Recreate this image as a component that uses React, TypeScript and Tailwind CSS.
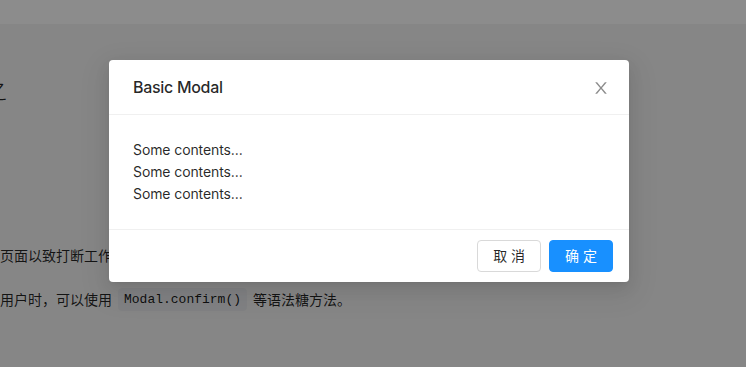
export default function App() {
  return (
    <div className="relative h-screen w-full overflow-hidden bg-[#f5f5f5] font-['Liberation_Sans','Noto_Sans_CJK_SC',sans-serif] text-black/85">
      <div className="h-6 bg-white" />
      <div className="flex flex-col">
        <h2 className="mt-[51px] -ml-[17px] text-2xl leading-8 font-light text-black/85">之</h2>
        <p className="mt-[138px] whitespace-nowrap text-sm leading-[22px]">
          页面以致打断工作流程，若需要进行复杂的交互，可以使用对话框。
        </p>
        <p className="mt-[21px] flex items-center whitespace-nowrap text-sm leading-[22px]">
          <span>用户时，可以使用</span>
          <code className="mx-[6px] rounded-sm bg-[#eaecee] px-[6px] py-[1px] font-['Liberation_Mono',monospace] text-[13px] leading-[21px] text-black/90">
            Modal.confirm()
          </code>
          <span>等语法糖方法。</span>
        </p>
      </div>

      <div className="absolute inset-0 bg-black/45 pt-[60px] pl-[109px]">
        <div className="relative w-[520px] rounded-sm bg-white font-['Inter','Noto_Sans_CJK_SC',sans-serif] shadow-[0_3px_6px_-4px_rgba(0,0,0,0.12),0_6px_16px_0_rgba(0,0,0,0.08),0_9px_28px_8px_rgba(0,0,0,0.05)]">
          <div className="border-b border-[#f0f0f0] px-6 py-4">
            <div className="text-base leading-[22px] font-medium tracking-[-0.3px] text-black/85">Basic Modal</div>
          </div>
          <button className="absolute top-0 right-0 flex h-14 w-14 items-center justify-center text-black/45">
            <svg viewBox="64 64 896 896" width="16" height="16" fill="currentColor">
              <path d="M563.8 512l262.5-312.9c4.4-5.2.7-13.1-6.1-13.1h-79.8c-4.7 0-9.2 2.1-12.3 5.7L511.6 449.8 295.1 191.7c-3-3.6-7.5-5.7-12.3-5.7H203c-6.8 0-10.5 7.9-6.1 13.1L459.4 512 196.9 824.9A7.95 7.95 0 00203 838h79.8c4.7 0 9.2-2.1 12.3-5.7l216.5-258.1 216.5 258.1c3 3.6 7.5 5.7 12.3 5.7h79.8c6.8 0 10.5-7.9 6.1-13.1L563.8 512z" />
            </svg>
          </button>
          <div className="p-6 text-sm leading-[22px] tracking-[-0.1px] text-black/85">
            <p>Some contents...</p>
            <p>Some contents...</p>
            <p>Some contents...</p>
          </div>
          <div className="flex justify-end gap-2 border-t border-[#f0f0f0] px-4 py-[10px]">
            <button className="h-8 rounded-sm border border-[#d9d9d9] bg-white px-[15px] text-sm text-black/85">
              取 消
            </button>
            <button className="h-8 rounded-sm border border-[#1890ff] bg-[#1890ff] px-[15px] text-sm text-white">
              确 定
            </button>
          </div>
        </div>
      </div>
    </div>
  );
}
